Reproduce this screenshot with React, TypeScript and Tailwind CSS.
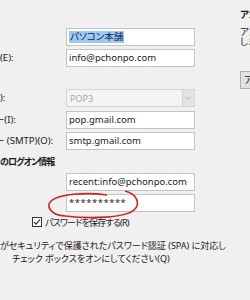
import React from "react";

const font = "font-['Noto_Sans','Noto_Sans_CJK_JP',sans-serif] [font-feature-settings:'palt']";

function Field({ children, className = "" }: { children?: React.ReactNode; className?: string }) {
  return (
    <div className={`h-[18px] w-[129px] bg-white border border-[#c3c3c3] flex items-center pl-[2px] text-[9.5px] text-[#1a1a1a] leading-none ${className}`}>
      {children}
    </div>
  );
}

function Row({ label, children, className = "" }: { label?: React.ReactNode; children: React.ReactNode; className?: string }) {
  return (
    <div className={`flex items-center ${className}`}>
      <div className="w-[66px] text-[9.5px] text-[#1a1a1a] whitespace-nowrap overflow-hidden leading-none">{label}</div>
      {children}
    </div>
  );
}

export default function App() {
  return (
    <div className={`w-[250px] h-[300px] bg-[#f0f0f0] overflow-hidden flex ${font}`}>
      <div className="w-[240px] shrink-0 flex flex-col pt-[28px] relative">
        <Row>
          <Field>
            <span className="bg-[#9fc8ef] text-[#0c2466] px-[1px] py-[1px]">パソコン本舗</span>
          </Field>
        </Row>
        <Row className="mt-[3px]" label={<span>(E):</span>}>
          <Field>info@pchonpo.com</Field>
        </Row>
        <Row className="mt-[22px]" label={<span>):</span>}>
          <div className="h-[18px] w-[129px] bg-[#f4f4f4] border border-[#d4d4d4] flex items-center text-[9px] text-[#a8a8a8] leading-none">
            <span className="pl-[3px] flex-1">POP3</span>
            <div className="w-[12px] h-full bg-[#e3e3e3] border-l border-[#d4d4d4] flex items-center justify-center">
              <svg width="7" height="5" viewBox="0 0 7 5">
                <path d="M1 1 L3.5 3.5 L6 1" stroke="#b5b5b5" strokeWidth="1" fill="none" />
              </svg>
            </div>
          </div>
        </Row>
        <Row className="mt-[4px]" label={<span className="-ml-[5px]">ー(I):</span>}>
          <Field>pop.gmail.com</Field>
        </Row>
        <Row className="mt-[3px]" label={<span className="-ml-[5px]">ー (SMTP)(O):</span>}>
          <Field>smtp.gmail.com</Field>
        </Row>
        <div className="mt-[6px] h-[12px] text-[9px] tracking-[-1px] font-bold text-[#1a1a1a] leading-[12px] whitespace-nowrap">のログオン情報</div>
        <Row className="mt-[5px]">
          <Field>recent:info@pchonpo.com</Field>
        </Row>
        <Row className="mt-[3px]">
          <Field className="tracking-[0.5px]">**********</Field>
        </Row>
        <div className="mt-[5px] flex items-center pl-[32px] h-[10px]">
          <div className="w-[10px] h-[10px] bg-white border border-[#333] flex items-center justify-center">
            <svg width="8" height="8" viewBox="0 0 8 8">
              <path d="M1 4 L3 6.2 L7 1.5" stroke="#222" strokeWidth="1.1" fill="none" />
            </svg>
          </div>
          <span className="ml-[3px] text-[9px] tracking-[-0.8px] text-[#1a1a1a] leading-none whitespace-nowrap">パスワードを保存する(R)</span>
        </div>
        <div className="mt-[12px] text-[9px] text-[#1a1a1a] leading-[13px] whitespace-nowrap">
          <div>がセキュリティで保護されたパスワード認証 (SPA) に対応し</div>
          <div className="pl-[12px]">チェック ボックスをオンにしてください(Q)</div>
        </div>
        <svg className="absolute left-[45px] top-[188px]" width="100" height="34" viewBox="0 0 100 34">
          <path
            d="M62 7 C 40 4, 14 6, 6 13 C 1 18, 5 27, 20 28 C 45 31, 80 30, 89 22 C 96 16, 92 6, 80 3"
            stroke="#d42020"
            strokeWidth="1.6"
            fill="none"
          />
        </svg>
      </div>
      <div className="flex-1 flex flex-col pt-[9px] whitespace-nowrap text-[9.5px] text-[#1a1a1a]">
        <div className="font-bold leading-[12px]">アカ</div>
        <div className="mt-[6px] leading-[10px]">アカ</div>
        <div className="leading-[10px]">しま</div>
        <div className="mt-[24px] h-[18px] bg-[#e1e1e1] border border-[#adadad] flex items-center pl-[3px] leading-none">ア</div>
      </div>
    </div>
  );
}
